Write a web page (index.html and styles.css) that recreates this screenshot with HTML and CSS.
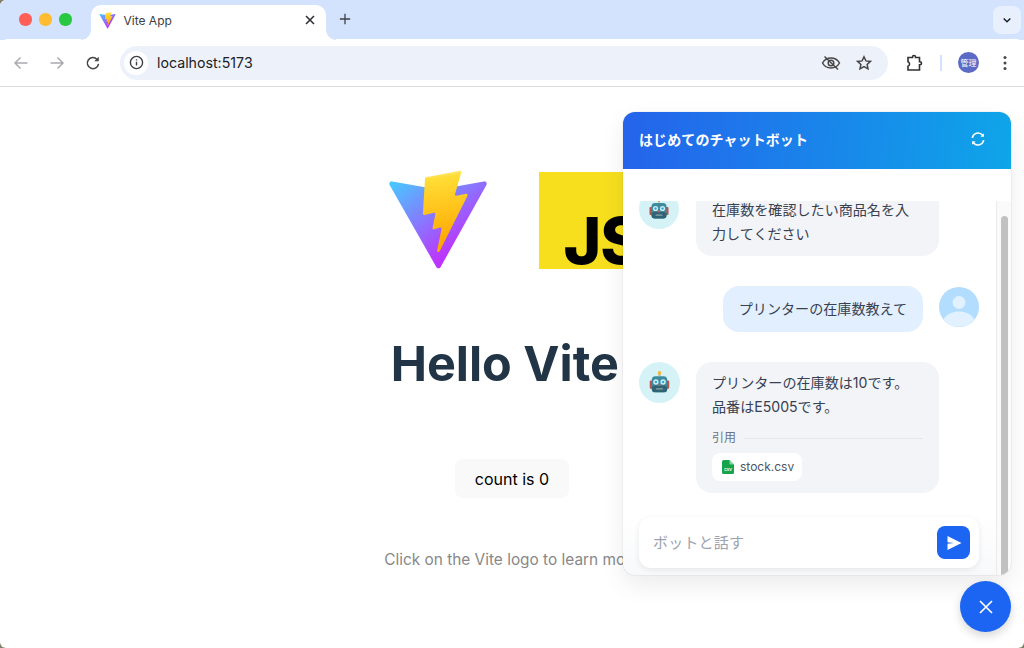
FILE: index.html
```html
<!DOCTYPE html>
<html lang="ja">
<head>
<meta charset="utf-8">
<title>Vite App</title>
<link rel="stylesheet" href="styles.css">
</head>
<body>
<div class="window">
  <header class="tabstrip">
    <div class="traffic">
      <span class="dot dot-red"></span>
      <span class="dot dot-yellow"></span>
      <span class="dot dot-green"></span>
    </div>
    <div class="tab">
      <svg class="tab-favicon" viewBox="0 0 410 404"><use href="#vite-shape"/></svg>
      <span class="tab-title">Vite App</span>
      <svg class="tab-close" viewBox="0 0 12 12"><path d="M2 2l8 8M10 2l-8 8"/></svg>
    </div>
    <svg class="tab-new" viewBox="0 0 14 14"><path d="M7 1v12M1 7h12"/></svg>
    <div class="tab-search"><svg viewBox="0 0 12 8"><path d="M2 1.500l4 4 4-4"/></svg></div>
  </header>
  <nav class="toolbar">
    <svg class="nav-icon nav-dim" viewBox="0 0 16 16"><path d="M14.500 8H2M7.500 2.500L2 8l5.500 5.500"/></svg>
    <svg class="nav-icon nav-dim" viewBox="0 0 16 16"><path d="M1.500 8H14M8.500 2.500L14 8l-5.500 5.500"/></svg>
    <svg class="nav-icon" viewBox="0 0 16 16"><path d="M13.500 8.800A5.600 5.600 0 1 1 12 4.200"/><path class="nav-fill" d="M13.800 1.700v4.600H9.200z"/></svg>
    <div class="omnibox">
      <span class="info-chip"><svg viewBox="0 0 16 16"><circle cx="8" cy="8" r="6.500"/><path d="M8 7.200v4M8 4.400v1.400"/></svg></span>
      <span class="url">localhost:5173</span>
      <svg class="omni-eye" viewBox="0 0 20 16"><path d="M1.500 8C3.500 4.500 6.500 3 10 3s6.500 1.500 8.500 5c-2 3.500-5 5-8.500 5S3.500 11.500 1.500 8z"/><circle cx="10" cy="8" r="2.800"/><path d="M3.500 1.500l13.500 13"/></svg>
      <svg class="omni-star" viewBox="0 0 16 16"><path d="M8 1.800l1.900 4.100 4.500.5-3.300 3 .9 4.400L8 11.600l-4 2.200.9-4.400-3.300-3 4.500-.5z"/></svg>
    </div>
    <svg class="ext-icon" viewBox="0 0 18 18"><path d="M3 3.500H7.500V3a1.500 1.500 0 0 1 3 0v.5h4v4.200h.5a1.500 1.500 0 0 1 0 3h-.5V16H3v-3.800a2.400 2.400 0 0 0 0-4.500z"/></svg>
    <span class="tool-sep"></span>
    <span class="profile">管理</span>
    <svg class="kebab" viewBox="0 0 4 16"><circle cx="2" cy="2.500" r="1.500"/><circle cx="2" cy="8" r="1.500"/><circle cx="2" cy="13.500" r="1.500"/></svg>
  </nav>
  <main class="page">
    <div class="logos">
      <svg class="logo" viewBox="0 0 410 404">
        <defs>
          <linearGradient id="vg-a" gradientUnits="userSpaceOnUse" x1="6" y1="33" x2="235" y2="344"><stop stop-color="#41D1FF"/><stop offset="1" stop-color="#BD34FE"/></linearGradient>
          <linearGradient id="vg-b" gradientUnits="userSpaceOnUse" x1="194.651" y1="8.818" x2="236.076" y2="292.989"><stop stop-color="#FFEA83"/><stop offset=".083" stop-color="#FFDD35"/><stop offset="1" stop-color="#FFA800"/></linearGradient>
          <g id="vite-shape">
            <path fill="url(#vg-a)" d="M399.641 59.525L215.643 388.545C211.844 395.338 202.084 395.378 198.228 388.618L10.582 59.556C6.381 52.19 12.68 43.267 21.028 44.759L205.223 77.682C206.398 77.892 207.601 77.89 208.776 77.676L389.119 44.806C397.439 43.289 403.768 52.143 399.641 59.525Z"/>
            <path fill="url(#vg-b)" d="M292.965 1.574L156.801 28.255C154.563 28.694 152.906 30.59 152.771 32.866L144.395 174.33C144.198 177.662 147.258 180.248 150.51 179.498L188.42 170.749C191.967 169.931 195.172 173.055 194.443 176.622L183.18 231.775C182.422 235.487 185.907 238.661 189.532 237.56L212.947 230.446C216.577 229.344 220.065 232.527 219.297 236.242L201.398 322.875C200.278 328.294 207.486 331.249 210.492 326.603L212.5 323.5L323.454 102.072C325.312 98.365 322.108 94.137 318.036 94.923L279.014 102.454C275.347 103.161 272.227 99.746 273.262 96.158L298.731 7.867C299.767 4.273 296.636 .855 292.965 1.574Z"/>
          </g>
        </defs>
        <use href="#vite-shape"/>
      </svg>
      <div class="js-logo"><span>JS</span></div>
    </div>
    <h1 class="title">Hello Vite<span class="title-bang">!</span></h1>
    <button class="counter" type="button">count is 0</button>
    <p class="hint">Click on the Vite logo to learn more</p>
  </main>

  <section class="chat">
    <div class="chat-head">
      <span class="chat-title">はじめてのチャットボット</span>
      <svg class="chat-refresh" viewBox="0 0 16 16"><path d="M2.400 7A5.700 5.700 0 0 1 12.600 4.300"/><path d="M13.600 9A5.700 5.700 0 0 1 3.400 11.700"/><path class="refresh-tip" d="M13.900 2.300v3.400h-3.400zM2.100 13.700v-3.400h3.400z"/></svg>
    </div>
    <div class="chat-gap"></div>
    <div class="chat-body">
      <div class="chat-main">
        <div class="messages">
          <div class="msg">
            <svg class="avatar"><use href="#robot"/></svg>
            <div class="bubble bubble-bot">在庫数を確認したい商品名を入力してください</div>
          </div>
          <div class="msg msg-user">
            <div class="bubble bubble-user">プリンターの在庫数教えて</div>
            <svg class="avatar-user" viewBox="0 0 40 40">
              <circle class="au-bg" cx="20" cy="20" r="20"/>
              <circle class="au-fg" cx="20" cy="15.500" r="6.500"/>
              <path class="au-fg" d="M4.500 32.500C8 27 13.500 24.500 20 24.500s12 2.500 15.500 8A20 20 0 0 1 4.500 32.500z"/>
            </svg>
          </div>
          <div class="msg">
            <svg class="avatar" viewBox="0 0 40 40">
              <defs>
                <g id="robot">
                  <circle cx="20" cy="20" r="20" fill="#d5f3f6"/>
                  <rect x="19" y="10.500" width="2" height="3" fill="#c9a86a"/>
                  <circle cx="20" cy="10.500" r="1.800" fill="#f6b73c"/>
                  <rect x="10.500" y="18" width="3" height="8" rx="1" fill="#b5534c"/>
                  <rect x="26.500" y="18" width="3" height="8" rx="1" fill="#b5534c"/>
                  <rect x="12.500" y="14" width="15" height="15.500" rx="3.500" fill="#3f8b9e"/>
                  <rect x="12.500" y="23" width="15" height="6.500" rx="3" fill="#2f6475"/>
                  <circle cx="16.500" cy="19.500" r="2.600" fill="#cfeff5"/>
                  <circle cx="23.500" cy="19.500" r="2.600" fill="#cfeff5"/>
                  <circle cx="16.500" cy="19.500" r="1.200" fill="#37a6d8"/>
                  <circle cx="23.500" cy="19.500" r="1.200" fill="#37a6d8"/>
                  <circle cx="20" cy="22.500" r="1" fill="#e2574c"/>
                  <rect x="16.500" y="25.500" width="7" height="1.300" rx=".6" fill="#8fa3ab"/>
                </g>
              </defs>
              <use href="#robot"/>
            </svg>
            <div class="bubble bubble-bot">
              <p class="bubble-line">プリンターの在庫数は10です。</p>
              <p class="bubble-line">品番はE5005です。</p>
              <div class="cite-head"><span>引用</span><span class="cite-rule"></span></div>
              <div class="file-chip">
                <svg class="file-icon" viewBox="0 0 12 14"><path class="file-body" d="M1.800 0H7.500L12 4.500V12.500A1.500 1.500 0 0 1 10.500 14H1.500A1.500 1.500 0 0 1 0 12.500V1.800A1.800 1.800 0 0 1 1.800 0z"/><path class="file-fold" d="M7.500 0L12 4.500H8.500a1 1 0 0 1-1-1z"/><text class="file-text" x="6" y="11.300">CSV</text></svg>
                <span>stock.csv</span>
              </div>
            </div>
          </div>
        </div>
        <div class="composer-wrap">
          <div class="composer">
            <span class="placeholder">ボットと話す</span>
            <span class="send"><svg viewBox="0 0 18 18"><path d="M2.500 2L16.500 9 2.500 16V9.700L9 9 2.500 8.300z"/></svg></span>
          </div>
        </div>
      </div>
      <div class="scrollbar"><div class="scroll-thumb"></div></div>
    </div>
  </section>
  <button class="fab" type="button" aria-label="閉じる"><svg viewBox="0 0 16 16"><path d="M2 2l12 12M14 2L2 14"/></svg></button>
</div>
</body>
</html>
```
FILE: styles.css
```css
* { box-sizing: border-box; }
html, body { margin: 0; height: 100%; }
body { font-family: Inter, "Noto Sans CJK JP", sans-serif; background: #85806a; overflow: hidden; }
svg { display: block; flex: none; }
p { margin: 0; }

.window { position: relative; width: 1024px; height: 648px; overflow: hidden; display: flex; flex-direction: column; background: #fff; border-radius: 6px 0 6px 6px; }

/* tab strip */
.tabstrip { height: 40px; flex: none; background: #d3e3fd; display: flex; align-items: flex-end; padding-left: 19px; }
.traffic { display: flex; gap: 7.500px; align-self: flex-start; margin-top: 13px; }
.dot { width: 12.500px; height: 12.500px; border-radius: 50%; }
.dot-red { background: #ff5f57; }
.dot-yellow { background: #febc2e; }
.dot-green { background: #28c840; }
.tab { position: relative; width: 235px; height: 35px; margin-left: 19px; background: #fff; border-radius: 10px 10px 0 0; display: flex; align-items: center; padding: 0 5px 5px 8px; }
.tab::before, .tab::after { content: ""; position: absolute; bottom: 0; width: 10px; height: 10px; }
.tab::before { left: -10px; background: radial-gradient(circle at 0 0, #d3e3fd 9.500px, #fff 10px); }
.tab::after { right: -10px; background: radial-gradient(circle at 100% 0, #d3e3fd 9.500px, #fff 10px); }
.tab-favicon { width: 17px; height: 17px; }
.tab-title { font-size: 12px; color: #3c4043; margin-left: 8px; flex: 1; }
.tab-close { width: 12px; height: 12px; margin-right: 5px; fill: none; stroke: #303134; stroke-width: 1.600; }
.tab-new { width: 12px; height: 12px; margin: 0 0 15px 13px; fill: none; stroke: #3c4043; stroke-width: 1.500; }
.tab-search { width: 28px; height: 28px; margin: 0 3px 6px auto; background: #e9f0fd; border-radius: 8px; display: flex; align-items: center; justify-content: center; }
.tab-search svg { width: 10px; height: 7px; fill: none; stroke: #202124; stroke-width: 1.800; }

/* toolbar */
.toolbar { height: 48px; flex: none; background: #fff; border-bottom: 1px solid #dadce0; border-radius: 8px 8px 0 0; margin-top: -1px; display: flex; align-items: center; padding: 1px 14px 1px 13px; }
.nav-icon { width: 16px; height: 16px; margin-right: 20px; fill: none; stroke: #474747; stroke-width: 1.500; }
.nav-dim { stroke: #a9abae; }
.nav-fill { fill: #474747; stroke: none; }
.omnibox { width: 768px; height: 34px; margin-left: -1px; background: #edf2fa; border-radius: 17px; display: flex; align-items: center; padding: 0 16px 0 4px; }
.info-chip { width: 24px; height: 24px; border-radius: 50%; background: #fff; display: flex; align-items: center; justify-content: center; }
.info-chip svg { width: 15px; height: 15px; fill: none; stroke: #3c4043; stroke-width: 1.500; }
.url { font-size: 14.200px; color: #202124; margin-left: 9px; flex: 1; }
.omni-eye { width: 20px; height: 16px; fill: none; stroke: #474747; stroke-width: 1.500; }
.omni-star { width: 16px; height: 16px; margin-left: 15px; fill: none; stroke: #474747; stroke-width: 1.500; }
.ext-icon { width: 18px; height: 18px; margin-left: 17px; fill: none; stroke: #303134; stroke-width: 1.600; }
.tool-sep { width: 2px; height: 16px; margin-left: 17px; background: #d3e3fd; }
.profile { width: 21px; height: 21px; margin-left: 16px; border-radius: 50%; background: #5b6ac4; color: #fff; font-size: 8px; display: flex; align-items: center; justify-content: center; white-space: nowrap; }
.kebab { width: 4px; height: 16px; margin-left: 24px; fill: #474747; }

/* vite page */
.page { flex: 1; display: flex; flex-direction: column; align-items: center; padding-top: 85px; color: #213547; }
.logos { display: flex; gap: 52px; height: 97px; }
.logo { width: 102px; height: 101px; margin: -2px; }
.js-logo { width: 97px; height: 97px; background: #f7df1e; display: flex; align-items: flex-end; padding-left: 25px; }
.js-logo span { font-size: 64px; line-height: 56px; font-weight: 800; color: #000; letter-spacing: -1px; white-space: nowrap; }
.title { margin: 67px 0 0 5px; font-size: 48.500px; line-height: 56px; font-weight: 700; }
.title-bang { margin-left: 3px; }
.counter { margin-top: 67px; height: 39px; padding: 0 19.500px; border: none; border-radius: 8px; background: #f9f9f9; color: #000; font: 400 16px Inter, sans-serif; }
.hint { margin-top: 50px; font-size: 15.400px; line-height: 24px; color: #888; }

/* chat overlay */
.chat { position: absolute; left: 623px; top: 112px; width: 388px; height: 463px; background: #fff; border-radius: 12px; overflow: hidden; display: flex; flex-direction: column; box-shadow: 0 0 1px rgba(0,0,0,.35), 0 10px 24px rgba(0,0,0,.08); }
.chat-head { height: 57px; flex: none; background: linear-gradient(95deg, #2563eb, #0ea5e9); display: flex; align-items: center; justify-content: space-between; padding: 0 25px 3px 16px; }
.chat-title { font-size: 14px; font-weight: 700; color: #fff; letter-spacing: .100px; }
.chat-refresh { width: 16px; height: 16px; fill: none; stroke: #fff; stroke-width: 1.700; }
.refresh-tip { fill: #fff; stroke: none; }
.chat-gap { height: 32px; flex: none; }
.chat-body { flex: 1; min-height: 0; display: flex; }
.chat-main { flex: 1; min-width: 0; display: flex; flex-direction: column; }
.messages { flex: 1; min-height: 0; overflow: hidden; display: flex; flex-direction: column; justify-content: flex-end; gap: 30px; padding: 0 17px 24px 16px; }
.msg { display: flex; flex: none; align-items: flex-start; gap: 16px; }
.msg-user { justify-content: flex-end; }
.avatar { width: 41px; height: 41px; }
.avatar-user { width: 40px; height: 40px; margin-top: 1px; }
.au-bg { fill: #b2ddff; }
.au-fg { fill: #e1f1ff; }
.bubble { font-size: 14.080px; line-height: 24px; color: #374151; border-radius: 16px; padding: 9px 16px 10px; }
.bubble-bot { width: 243px; background: #f2f4f7; }
.bubble-user { background: #e1efff; padding: 11px 16px; }
.cite-head { display: flex; align-items: center; gap: 8px; margin-top: 10px; font-size: 12px; line-height: 18px; color: #6b7280; }
.cite-rule { flex: 1; height: 1px; background: #e5e7eb; }
.file-chip { display: inline-flex; align-items: center; gap: 6px; height: 28px; margin: 6px 0 2px; padding: 0 8px 0 10px; background: #fff; border-radius: 8px; font-size: 12px; line-height: 18px; color: #4b5563; }
.file-icon { width: 12px; height: 14px; }
.file-body { fill: #16a34a; }
.file-fold { fill: #86d8a8; }
.file-text { font-size: 3.600px; font-weight: 700; fill: #fff; text-anchor: middle; }
.composer-wrap { height: 58px; flex: none; background: linear-gradient(#fff, #f8f9fb); padding: 0 17px 7px 16px; }
.composer { height: 51px; background: #fff; border-radius: 12px; box-shadow: 0 2px 6px rgba(0,0,0,.08); display: flex; align-items: center; justify-content: space-between; padding: 0 9px 0 14px; }
.placeholder { font-size: 15px; color: #9ca3af; letter-spacing: .200px; margin-bottom: 3px; }
.send { width: 33px; height: 33px; background: #1c64f2; border-radius: 8px; display: flex; align-items: center; justify-content: center; }
.send svg { width: 18px; height: 18px; fill: #fff; }
.scrollbar { width: 15px; flex: none; background: #fafafa; border-left: 1px solid #ebebeb; padding: 15px 3px 0 4px; }
.scroll-thumb { height: 100%; background: #c1c1c1; border-radius: 4px 4px 0 0; }
.fab { position: absolute; left: 960px; top: 581px; width: 51px; height: 51px; border: none; border-radius: 50%; background: #1c64f2; box-shadow: 0 4px 10px rgba(0,0,0,.16); display: flex; align-items: center; justify-content: center; padding: 0; }
.fab svg { width: 16px; height: 16px; fill: none; stroke: #fff; stroke-width: 1.700; }
```
